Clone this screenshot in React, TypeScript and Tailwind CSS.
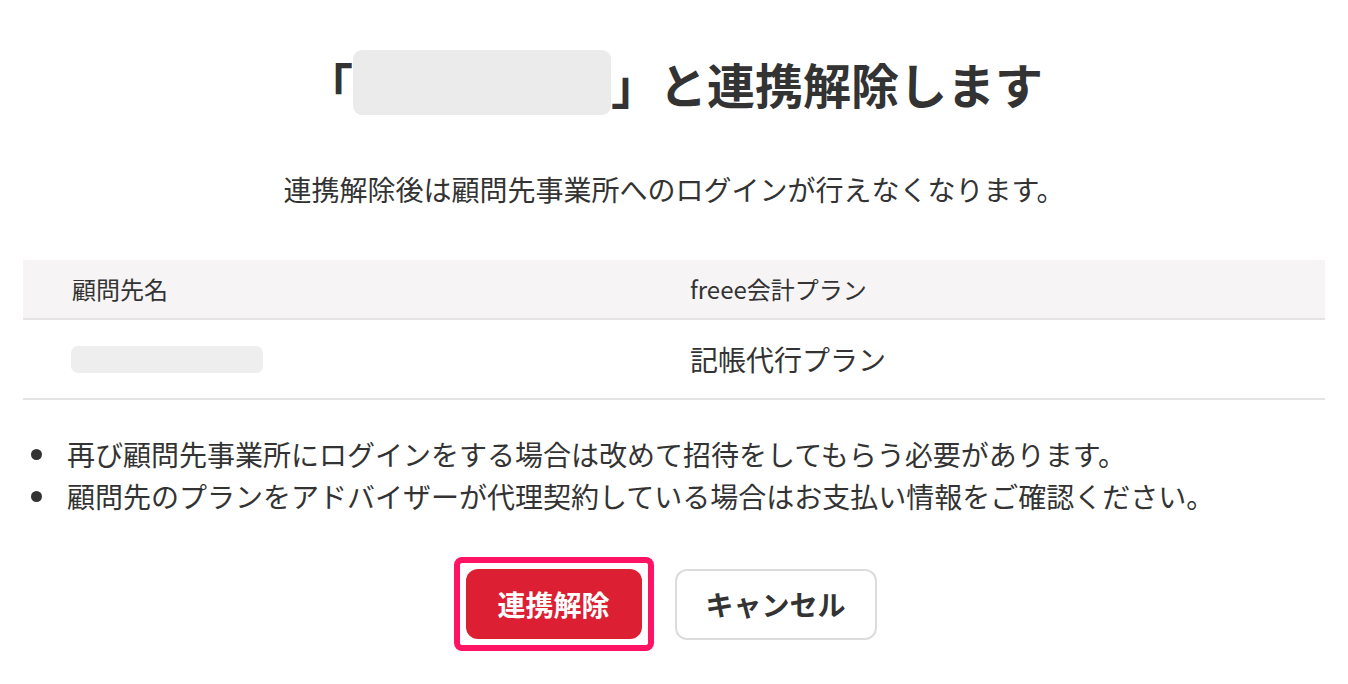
import React from "react";

export default function App() {
  const font = { fontFamily: '"Noto Sans CJK JP", "Noto Sans", sans-serif' };
  return (
    <div className="w-[1348px] h-[684px] bg-white text-[#333333] overflow-hidden" style={font}>
      <div className="flex flex-col items-center">
        <h1 className="mt-[50px] h-[65px] flex items-center text-[48px] font-bold leading-none">
          <span>「</span>
          <span className="inline-block w-[258px] h-[65px] rounded-[9px] bg-[#ebebeb]"></span>
          <span>」と連携解除します</span>
        </h1>
        <p className="mt-[54px] text-[28px] leading-[40px]">
          連携解除後は顧問先事業所へのログインが行えなくなります。
        </p>
      </div>

      <div className="mx-[23px] mt-[51px]">
        <div className="grid grid-cols-[667px_1fr] h-[58px] items-center bg-[#f6f4f4] text-[24px]">
          <div className="pl-[49px]">顧問先名</div>
          <div>freee会計プラン</div>
        </div>
        <div className="h-[2px] bg-[#e4e4e4]"></div>
        <div className="grid grid-cols-[667px_1fr] h-[78px] items-center text-[28px]">
          <div className="pl-[48px]">
            <div className="w-[192px] h-[27px] rounded-[7px] bg-[#eeeeee]"></div>
          </div>
          <div>記帳代行プラン</div>
        </div>
        <div className="h-[2px] bg-[#e4e4e4]"></div>
      </div>

      <ul className="mt-[33px] flex flex-col text-[28px] leading-[42px]">
        <li className="flex items-center">
          <span className="ml-[31px] w-[11px] h-[11px] rounded-full bg-[#333333]"></span>
          <span className="ml-[25px]">再び顧問先事業所にログインをする場合は改めて招待をしてもらう必要があります。</span>
        </li>
        <li className="flex items-center">
          <span className="ml-[31px] w-[11px] h-[11px] rounded-full bg-[#333333]"></span>
          <span className="ml-[25px]">顧問先のプランをアドバイザーが代理契約している場合はお支払い情報をご確認ください。</span>
        </li>
      </ul>

      <div className="mt-[40px] flex justify-center items-center gap-[21px] pr-[18px]">
        <div className="border-[6px] border-[#ff1464] rounded-[8px] p-[6px]">
          <button className="w-[176px] h-[70px] rounded-[12px] bg-[#dc1f33] text-white text-[28px] font-bold">
            連携解除
          </button>
        </div>
        <button className="w-[202px] h-[71px] rounded-[12px] border-2 border-[#dcdcdc] bg-white text-[28px] font-bold text-[#333333]">
          キャンセル
        </button>
      </div>
    </div>
  );
}
